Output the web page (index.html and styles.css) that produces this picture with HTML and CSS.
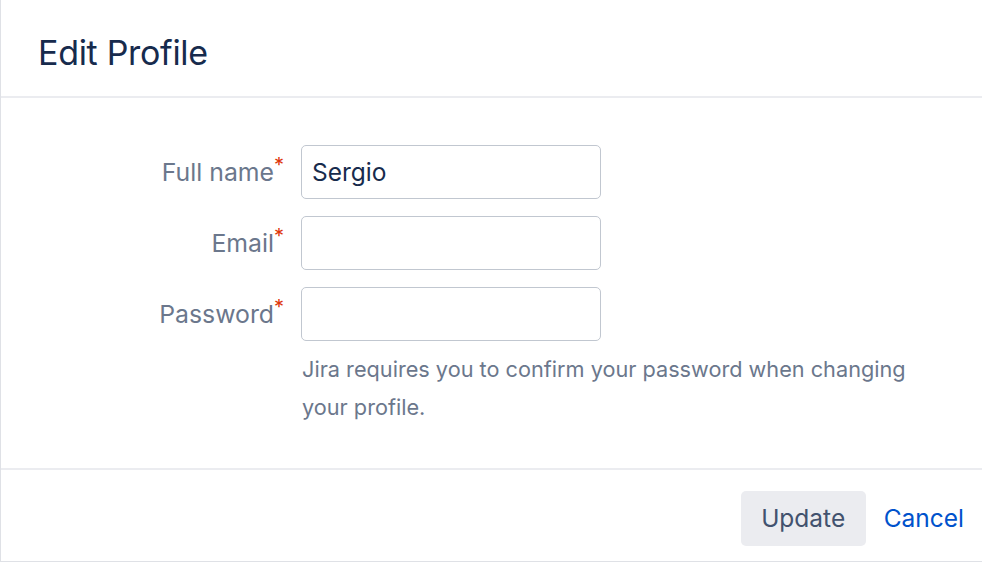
FILE: index.html
```html
<!DOCTYPE html>
<html>
<head>
<meta charset="utf-8">
<link rel="stylesheet" href="styles.css">
</head>
<body>
<div class="dialog">
  <header class="header">
    <h1 class="title">Edit Profile</h1>
  </header>
  <main class="content">
    <form class="form">
      <label class="label" for="fullname">Full name<span class="req">*</span></label>
      <input class="input" id="fullname" type="text" value="Sergio">
      <label class="label" for="email">Email<span class="req">*</span></label>
      <input class="input" id="email" type="text">
      <label class="label" for="password">Password<span class="req">*</span></label>
      <input class="input" id="password" type="password">
      <p class="help">Jira requires you to confirm your password when changing your profile.</p>
    </form>
  </main>
  <footer class="footer">
    <button class="btn" type="button">Update</button>
    <a class="cancel" href="#">Cancel</a>
  </footer>
</div>
</body>
</html>
```
FILE: styles.css
```css
* { box-sizing: border-box; }
html, body { margin: 0; padding: 0; background: #fff; }
body {
  font-family: Inter, "Noto Sans", "Liberation Sans", sans-serif;
  color: #172b4d;
}
.dialog {
  width: 982px;
  height: 562px;
  border-left: 1px solid #dfe1e6;
  border-bottom: 1px solid #dfe1e6;
  display: flex;
  flex-direction: column;
}
.header {
  height: 98px;
  flex: none;
  border-bottom: 2px solid #ebecf0;
  display: flex;
  align-items: center;
  padding: 8px 0 0 37px;
}
.title {
  margin: 0;
  font-size: 34px;
  font-weight: 400;
  color: #172b4d;
  letter-spacing: -0.3px;
}
.content {
  flex: 1;
  padding-top: 47px;
}
.form {
  display: grid;
  grid-template-columns: 283px 300px;
  column-gap: 17px;
  row-gap: 17px;
  align-items: center;
}
.label {
  justify-self: end;
  font-size: 24.8px;
  color: #6b778c;
  position: relative;
  padding-right: 10px;
}
.req {
  position: absolute;
  right: 0;
  top: -4px;
  color: #de350b;
  font-size: 20px;
}
.input {
  width: 300px;
  height: 54px;
  border: 1px solid #c1c7d0;
  border-radius: 5px;
  padding: 0 10px;
  font-family: inherit;
  font-size: 24.5px;
  color: #172b4d;
  background: #fff;
  outline: none;
}
.help {
  grid-column: 2;
  width: 620px;
  margin: -8px 0 0 1px;
  font-size: 21.7px;
  line-height: 38px;
  color: #6b778c;
}
.footer {
  height: 93px;
  flex: none;
  border-top: 2px solid #ebecf0;
  display: flex;
  align-items: center;
  justify-content: flex-end;
  padding: 5px 18px 0 0;
}
.btn {
  width: 125px;
  height: 55px;
  border: none;
  border-radius: 5px;
  background: #ebecf0;
  color: #42526e;
  font-family: inherit;
  font-size: 24.5px;
  margin-right: 18px;
}
.cancel {
  font-size: 24.5px;
  color: #0052cc;
  text-decoration: none;
}
```
